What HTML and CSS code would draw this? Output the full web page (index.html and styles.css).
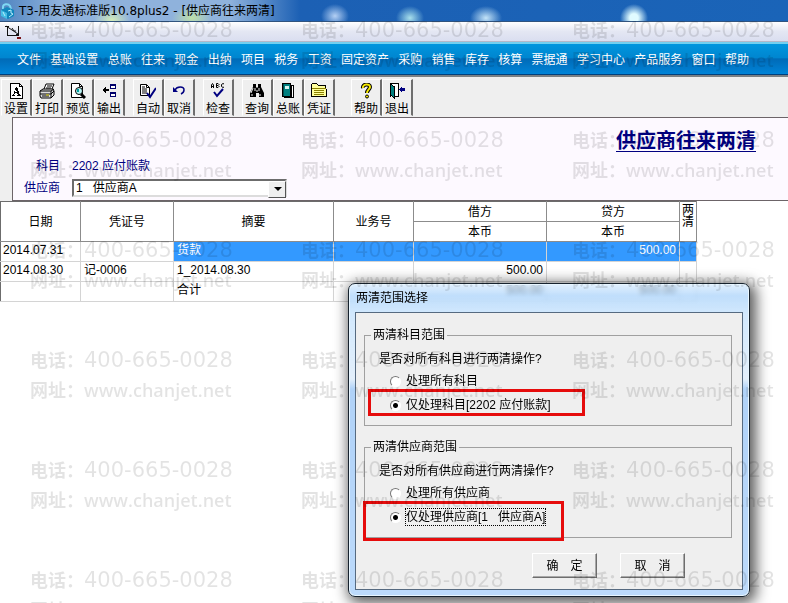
FILE: index.html
```html
<!DOCTYPE html>
<html lang="zh-CN">
<head>
  <meta charset="UTF-8" />
  <title>T3-用友通标准版10.8plus2 - [供应商往来两清]</title>
  <meta name="viewport" content="width=device-width, initial-scale=1" />
  <link rel="stylesheet" href="styles.css">
</head>
<body>
  <div class="app">
    <header class="titlebar">
      <svg class="app-icon" width="15" height="17" viewBox="0 0 15 17">
        <path d="M3 7V5c0-3 5-4 7-1l1 3" fill="none" stroke="#7fd8f4" stroke-width="2" />
        <path d="M1 8l6-3 7 3v6l-6 3-7-3z" fill="#1287bd" />
        <path d="M1 8l6 3v6l-6-3z" fill="#46bde5" />
        <path d="M8 9l3-1v3l2 1-4 3M3 10l2 4" fill="none" stroke="#b8eefb" />
      </svg>
      <h1>T3-用友通标准版10.8plus2 - [供应商往来两清]</h1>
    </header>

    <div class="childbar">
      <svg width="18" height="16" viewBox="0 0 18 16">
        <path d="M0 2.500h4M1 2l12 8M2.500 3v8M2 11.500h10M7 4l2 3h2M13.500 2v9" fill="none" stroke="#111" />
        <path d="M11 10h3v2h-3z" fill="#111" />
        <path d="M12 13h4v2h-4z" fill="#7a1418" />
      </svg>
    </div>

    <nav class="menu">
      <a href="#">文件</a>
      <a href="#">基础设置</a>
      <a href="#">总账</a>
      <a href="#">往来</a>
      <a href="#">现金</a>
      <a href="#">出纳</a>
      <a href="#">项目</a>
      <a href="#">税务</a>
      <a href="#">工资</a>
      <a href="#">固定资产</a>
      <a href="#">采购</a>
      <a href="#">销售</a>
      <a href="#">库存</a>
      <a href="#">核算</a>
      <a href="#">票据通</a>
      <a href="#">学习中心</a>
      <a href="#">产品服务</a>
      <a href="#">窗口</a>
      <a href="#">帮助</a>
    </nav>

    <div class="toolbar">
      <div class="tool-group">
        <button type="button">
          <svg width="16" height="16" viewBox="0 0 16 16" shape-rendering="crispEdges">
            <path d="M2.500.500h9l3 3v12h-12z" fill="#fff" stroke="#000" />
            <path d="M11.500.500v3h3" fill="none" stroke="#000" />
            <path d="M8 4h1l3 8h1v1H9v-1h1l-1-2H7l-1 2h1v1H4v-1h1zM8 6L7 9h2z" fill="#000" fill-rule="evenodd" />
          </svg>
          设置
        </button>
        <button type="button">
          <svg width="16" height="16" viewBox="0 0 16 16">
            <path d="M5 6l2-5h8l-2 5" fill="#fff" stroke="#000" />
            <path d="M8 3h5M7 5h5" stroke="#000" />
            <path d="M1 8l3-2h10l1 2v4l-3 3H2l-1-2z" fill="#ddd" stroke="#000" />
            <path d="M1 8h11v7M12 8l3-2M1 11h11l3-3M3 13h7" fill="none" stroke="#000" />
            <path d="M7 12h3" stroke="#dcd000" />
          </svg>
          打印
        </button>
        <button type="button">
          <svg width="16" height="16" viewBox="0 0 16 16">
            <path d="M1.500.500h8l3 3v11h-11z" fill="#fff" stroke="#000" />
            <path d="M9.500.500v3h3" fill="none" stroke="#000" />
            <circle cx="9" cy="8" r="3.500" fill="#b8f4f4" stroke="#000" />
            <path d="M8 6v3" stroke="#00a0a0" stroke-width="2" />
            <path d="M11 11l4 4" stroke="#000" stroke-width="3" />
          </svg>
          预览
        </button>
        <button type="button">
          <svg width="16" height="16" viewBox="0 0 16 16" shape-rendering="crispEdges">
            <path d="M1 7l4-4v3h3v2H5v3z" fill="#000" />
            <path d="M9.500 1.500h5v4h-5zM9.500 9.500h5v4h-5z" fill="#fff" stroke="#00006b" />
            <path d="M9 2h6M9 10h6" stroke="#00006b" stroke-width="2" />
          </svg>
          输出
        </button>
      </div>
      <div class="tool-group">
        <button type="button">
          <svg width="16" height="16" viewBox="0 0 16 16">
            <path d="M.500 1.500h6l3 3v8h-9z" fill="#fff" stroke="#000" />
            <path d="M6.500 1.500v3h3M2 4h3M2 6h5M2 8h5M2 10h5" fill="none" stroke="#000" />
            <path d="M7 10l3 4 6-9" fill="none" stroke="#000080" stroke-width="2" />
          </svg>
          自动
        </button>
        <button type="button">
          <svg width="16" height="16" viewBox="0 0 16 16">
            <path d="M2 4v5h5z" fill="#000080" />
            <path d="M4 7c2-4 9-4 9 0 0 2-1 3-3 4" fill="none" stroke="#000080" stroke-width="1.500" />
          </svg>
          取消
        </button>
      </div>
      <div class="tool-group">
        <button type="button">
          <svg width="16" height="16" viewBox="0 0 16 16">
            <path d="M1.500 5V2l1-1.500 1 1.500v3M1.500 3.500h2M6.500.500v4H8l1-1-1-1 1-1-1-1zM6.500 2.500H8M14 1l-1-.500-1.500 1v2l1.500 1 1-.500" fill="none" stroke="#000" />
            <path d="M4 9l3 4 6-7" fill="none" stroke="#000080" stroke-width="2" />
          </svg>
          检查
        </button>
      </div>
      <div class="tool-group">
        <button type="button">
          <svg width="16" height="16" viewBox="0 0 16 16">
            <path d="M4 1h3v3l1 1 1-1V1h3v3l3 6v4h-5v-4H7v4H1v-4l3-6z" fill="#000" />
            <path d="M4 5L2 10M6 5v3M10 5v3M3 11v2M11 11v2M8 7v2" stroke="#eee" />
          </svg>
          查询
        </button>
        <button type="button">
          <svg width="16" height="16" viewBox="0 0 16 16" shape-rendering="crispEdges">
            <path d="M4.500 2.500h9v12h-9z" fill="#fff" stroke="#000" />
            <path d="M11.500 3v11" stroke="#000" />
            <path d="M2.500.500h8v13h-8z" fill="#008080" stroke="#000" />
            <path d="M5 3h4v3H5z" fill="#d4f4f0" />
            <path d="M3.500 1v12" stroke="#004a4a" />
          </svg>
          总账
        </button>
        <button type="button">
          <svg width="16" height="16" viewBox="0 0 16 16" shape-rendering="crispEdges">
            <path d="M.500 13.500v-12l1-1h4l2 2h7v3l1 1v7z" fill="#ffff9c" stroke="#000" />
            <path d="M1 5h14M3 7.500h10M3 9.500h10M3 11.500h10" stroke="#8a8100" />
          </svg>
          凭证
        </button>
      </div>
      <div class="tool-group tool-group-last">
        <button type="button">
          <svg width="16" height="16" viewBox="0 0 16 16">
            <path d="M5 5c-1-4 7-5 7-1 0 2-3 3-3 6" fill="none" stroke="#000" stroke-width="4" />
            <path d="M5 5c-1-4 7-5 7-1 0 2-3 3-3 6" fill="none" stroke="#f4e800" stroke-width="2" />
            <circle cx="9" cy="13.500" r="1.500" fill="#f4e800" stroke="#000" />
          </svg>
          帮助
        </button>
        <button type="button">
          <svg width="16" height="16" viewBox="0 0 16 16" shape-rendering="crispEdges">
            <path d="M1 13.500V.500h8v13H6" fill="#fff" stroke="#000" />
            <path d="M1.500 1l4 3v11l-4-3z" fill="#008080" stroke="#000" />
            <path d="M10 6l3-3v2h3v3h-3v2z" fill="#000080" />
          </svg>
          退出
        </button>
      </div>
    </div>

    <main class="workspace">
      <section class="query">
        <h2>供应商往来两清</h2>
        <div class="field">
          <span class="field-label">科目</span>
          <span>2202 应付账款</span>
        </div>
        <div class="field">
          <label class="field-label" for="supplier">供应商</label>
          <span class="combo">
            <select id="supplier">
              <option>1&nbsp;&nbsp; 供应商A</option>
            </select>
          </span>
        </div>
      </section>

      <table class="ledger">
        <colgroup>
          <col class="col-date">
          <col class="col-voucher">
          <col class="col-summary">
          <col class="col-biz">
          <col class="col-amount">
          <col class="col-amount">
          <col class="col-mark">
        </colgroup>
        <thead>
          <tr>
            <th rowspan="2">日期</th>
            <th rowspan="2">凭证号</th>
            <th rowspan="2">摘要</th>
            <th rowspan="2">业务号</th>
            <th>借方</th>
            <th>贷方</th>
            <th rowspan="2" class="mark">两清</th>
          </tr>
          <tr>
            <th>本币</th>
            <th>本币</th>
          </tr>
        </thead>
        <tbody>
          <tr class="selected">
            <td>2014.07.31</td>
            <td></td>
            <td>货款</td>
            <td></td>
            <td class="num"></td>
            <td class="num">500.00</td>
            <td></td>
          </tr>
          <tr>
            <td>2014.08.30</td>
            <td>记-0006</td>
            <td>1_2014.08.30</td>
            <td></td>
            <td class="num">500.00</td>
            <td class="num"></td>
            <td></td>
          </tr>
          <tr>
            <td></td>
            <td></td>
            <td>合计</td>
            <td></td>
            <td class="num">500.00</td>
            <td class="num">500.00</td>
            <td></td>
          </tr>
        </tbody>
      </table>
    </main>

    <form class="dialog" role="dialog" aria-labelledby="dialogTitle" onsubmit="return false;">
      <h3 id="dialogTitle">两清范围选择</h3>
      <div class="dialog-body">
        <fieldset>
          <legend>两清科目范围</legend>
          <p>是否对所有科目进行两清操作?</p>
          <label><input type="radio" name="subject" /><span>处理所有科目</span></label>
          <label><input type="radio" name="subject" checked /><span>仅处理科目[2202 应付账款]</span></label>
        </fieldset>
        <fieldset>
          <legend>两清供应商范围</legend>
          <p>是否对所有供应商进行两清操作?</p>
          <label><input type="radio" name="vendor" /><span>处理所有供应商</span></label>
          <label><input type="radio" name="vendor" checked /><span class="focused">仅处理供应商[1&nbsp;&nbsp; 供应商A]</span></label>
        </fieldset>
        <div class="dialog-buttons">
          <button type="submit">确&emsp;定</button>
          <button type="button">取&emsp;消</button>
        </div>
      </div>
      <div class="callout callout-subject"></div>
      <div class="callout callout-vendor"></div>
    </form>

    <div class="watermark" id="watermark" aria-hidden="true"></div>
  </div>

  <script>
    // tile the contact details over the whole window
    const layer = document.getElementById("watermark");
    for (let i = 0; i < 18; i++) {
      const item = document.createElement("div");
      item.innerHTML = '<p>电话：<span class="phone">400-665-0028</span></p>' +
        '<p>网址：<span class="site">www.chanjet.net</span></p>';
      layer.appendChild(item);
    }
  </script>
</body>
</html>
```
FILE: styles.css
```css
* {
  box-sizing: border-box;
}
body {
  margin: 0;
  font: 12px/16px "Liberation Sans", "Noto Sans CJK SC", sans-serif;
  color: #000;
  background: #fff;
}
h1, h2, h3, p {
  margin: 0;
  font-size: 12px;
  font-weight: normal;
}
button, select {
  font: inherit;
  color: inherit;
}
.app {
  position: relative;
  min-height: 100vh;
  overflow: hidden;
}

/* window title */
.titlebar {
  display: flex;
  align-items: center;
  gap: 4px;
  height: 21px;
  background:
    radial-gradient(ellipse 14px 12px at 335px 16px, #b4d0f4, transparent),
    radial-gradient(ellipse 14px 12px at 410px 18px, #a8e0ec, transparent),
    radial-gradient(ellipse 16px 12px at 486px 18px, #c4e4f8, transparent),
    radial-gradient(ellipse 14px 14px at 634px 18px, #e0fbff 30%, transparent),
    radial-gradient(ellipse 20px 12px at 192px 18px, #bfe0a8, transparent),
    radial-gradient(ellipse 18px 12px at 112px 20px, #d4ecb8, transparent),
    linear-gradient(90deg, #4f84c0, #8fb2dc 60px, #8fb2dc 230px, #1c60b4 300px, #1a64b8);
}
.titlebar h1 {
  font-family: "DejaVu Sans", "Noto Sans CJK SC", sans-serif;
}
.childbar {
  display: flex;
  align-items: center;
  height: 21px;
  padding-left: 5px;
  border-top: 1px solid #31547f;
  border-bottom: 1px solid #b4b8c8;
  background: linear-gradient(#fff, #e4e7f3 50%, #dadef0);
}

/* menu */
.menu {
  display: flex;
  justify-content: space-between;
  align-items: center;
  height: 33px;
  padding: 1px 39px 0 17px;
  border-top: 2px solid #72d0f0;
  border-bottom: 1px solid #00407c;
  background: linear-gradient(#0096de, #0086d0 45%, #006bb8 50%, #0084d8);
}
.menu a {
  color: #fff;
  text-decoration: none;
  white-space: nowrap;
}

/* toolbar */
.toolbar {
  display: flex;
  gap: 8px;
  height: 42px;
  padding: 2px 0 0 1px;
  border-top: 2px solid #7b8084;
  background: #efefef;
}
.tool-group {
  display: flex;
}
.tool-group-last {
  margin-left: 8px;
}
.toolbar button {
  display: flex;
  flex-direction: column;
  align-items: center;
  gap: 2px;
  width: 31px;
  height: 37px;
  padding: 3px 0 0;
  border: 1px solid;
  border-color: #fff #6e6e6e #efefef #fff;
  border-right-width: 2px;
  background: #efefef;
  white-space: nowrap;
}
.toolbar svg {
  flex: none;
}

/* query header */
.workspace {
  background: #fff;
}
.query {
  display: flex;
  flex-direction: column;
  height: 84px;
  margin-left: 12px;
  padding: 11px 32px 0 0;
  border-top: 1px solid #6c6468;
  border-bottom: 1px solid #6c6468;
  border-left: 1px solid #6c6468;
  background: #fdf9ff;
  box-shadow: -12px 0 #efefef;
  color: #000080;
}
.query h2 {
  align-self: flex-end;
  font-size: 20px;
  line-height: 24px;
  font-weight: bold;
  text-decoration: underline 1px;
  text-underline-offset: 3px;
}
.field {
  display: flex;
  align-items: center;
  gap: 12px;
  height: 22px;
}
.query h2 + .field {
  margin-top: 2px;
}
.field-label {
  width: 47px;
  text-align: right;
}
.combo {
  position: relative;
  width: 215px;
  height: 18px;
}
.combo select {
  appearance: none;
  display: block;
  width: 100%;
  height: 18px;
  padding: 0 20px 0 2px;
  border: 2px solid;
  border-color: #6c6c6c #dcdcdc #dcdcdc #6c6c6c;
  border-radius: 0;
  background: #fff;
  color: #000;
  line-height: 14px;
}
.combo::after {
  content: "";
  position: absolute;
  top: 2px;
  right: 1px;
  width: 16px;
  height: 15px;
  border: 1px solid;
  border-color: #fff #555 #555 #fff;
  background: #efefef;
  pointer-events: none;
}
.combo::before {
  content: "";
  position: absolute;
  z-index: 1;
  top: 8px;
  right: 5px;
  border: 4px solid transparent;
  border-top-color: #000;
  border-bottom: 0;
  pointer-events: none;
}

/* ledger */
.ledger {
  width: 696px;
  table-layout: fixed;
  border-collapse: collapse;
  border-top: 1px solid #6c6c6c;
  border-left: 1px solid #6c6c6c;
}
.col-date { width: 80px; }
.col-voucher { width: 93px; }
.col-summary { width: 160px; }
.col-biz { width: 80px; }
.col-amount { width: 133px; }
.col-mark { width: 17px; }
.ledger tr {
  height: 20px;
}
.ledger th {
  padding: 0;
  border-right: 1px solid #8c8c8c;
  border-bottom: 1px solid #8c8c8c;
  font-weight: normal;
}
.ledger th.mark {
  padding: 2px 1px 0;
  vertical-align: top;
  line-height: 12px;
}
.ledger td {
  padding: 0 3px 3px;
  border-right: 1px solid #d4d4d4;
  border-bottom: 1px solid #d4d4d4;
  line-height: 16px;
}
.ledger td:first-child {
  padding-left: 2px;
}
.ledger td.num {
  text-align: right;
}
.selected td:nth-child(n+3) {
  background: #3399ff;
  color: #fff;
}

/* dialog */
.dialog {
  position: absolute;
  top: 283px;
  left: 348px;
  width: 402px;
  padding: 0 6px 6px;
  border: 1px solid #17232e;
  border-radius: 7px;
  background: linear-gradient(rgba(205, 230, 253, .6), rgba(165, 208, 250, .7) 12px, rgba(205, 230, 253, .9) 30px, #e3effb 95px, #b0d2f8 105px, #bcdafb);
  backdrop-filter: blur(2px);
  box-shadow: inset 0 0 0 1px #e8f6ff, 3px 3px 14px 3px rgba(0, 0, 0, .65);
}
.dialog h3 {
  height: 28px;
  padding: 6px 1px 0;
}
.dialog-body {
  display: flex;
  flex-direction: column;
  gap: 13px;
  padding: 14px 10px 11px 8px;
  border: 1px solid #566a80;
  background: #efefef;
}
.dialog fieldset {
  height: 99px;
  margin: 0;
  padding: 8px 14px 0;
  border: 1px solid #a0a0a0;
}
.dialog legend {
  margin-left: -8px;
  padding: 0 2px;
}
.dialog label {
  display: flex;
  align-items: center;
  gap: 5px;
  height: 24px;
  padding-left: 11px;
}
.dialog fieldset p {
  height: 18px;
}
.dialog input {
  appearance: none;
  width: 11px;
  height: 11px;
  margin: 0;
  border: 1px solid;
  border-color: #777 #fff #fff #777;
  border-radius: 50%;
  background: #fff;
}
.dialog input:checked {
  background: radial-gradient(circle, #000 2px, #fff 3px);
}
.focused {
  outline: 1px dotted #000;
}
.dialog-buttons {
  display: flex;
  justify-content: flex-end;
  gap: 23px;
  margin-top: 2px;
  padding-right: 47px;
}
.dialog-buttons button {
  width: 65px;
  height: 25px;
  padding: 0;
  border: 1px solid;
  border-color: #fff #6e6e6e #6e6e6e #fff;
  box-shadow: inset -1px -1px #a8a8a8;
  background: #efefef;
}
.callout {
  position: absolute;
  border: 3px solid #e60c0c;
  pointer-events: none;
}
.callout-subject {
  top: 105px;
  left: 19px;
  width: 217px;
  height: 27px;
}
.callout-vendor {
  top: 217px;
  left: 14px;
  width: 201px;
  height: 40px;
}

/* watermark */
.watermark {
  position: absolute;
  inset: 0 auto auto 30px;
  display: grid;
  grid-template-columns: repeat(3, 271px);
  grid-auto-rows: 110px;
  height: 100%;
  padding-top: 14px;
  overflow: hidden;
  color: rgba(0, 0, 0, .11);
  pointer-events: none;
}
.watermark p {
  font: bold 18px/30px "Noto Sans CJK SC", sans-serif;
  height: 30px;
  white-space: nowrap;
}
.watermark .phone {
  font: 21px/20px "DejaVu Sans", sans-serif;
}
.watermark .site {
  font: 600 18px/20px "Open Sans", sans-serif;
}
```
